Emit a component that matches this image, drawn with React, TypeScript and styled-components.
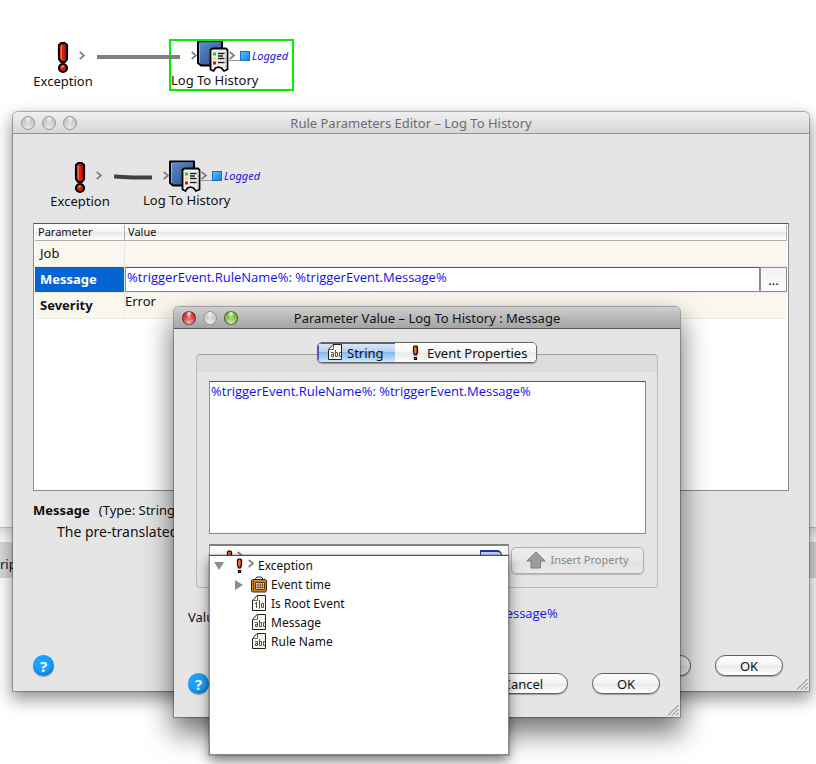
import React from 'react';
import styled, { createGlobalStyle, css } from 'styled-components';

const GlobalStyle = createGlobalStyle`
  * { box-sizing: border-box; }
  body {
    margin: 0;
    background: #fff;
    color: #111;
    font-family: "Noto Sans", "Open Sans", sans-serif;
    font-size: 13px;
    line-height: 18px;
  }
  button, input, textarea { font: inherit; color: inherit; }
`;

const Desktop = styled.main`
  position: relative;
  min-height: 100vh;
  overflow: hidden;
`;

const expressionText = css`
  color: #1010f0;
  font-family: "Open Sans", sans-serif;
`;

/* ---------- page behind the windows ---------- */

const Canvas = styled.section`
  min-height: 528px;
  padding: 39px 34px;
  border-bottom: 1px solid #c4c4c4;
`;

const Divider = styled.div`
  height: 14px;
  background: linear-gradient(#e4e4e4, #f8f8f8 60%, #fff);
`;

const ScriptBar = styled.div`
  height: 36px;
  padding-top: 13px;
  background: #d9d9d9;
`;

/* ---------- rule diagram ---------- */

const Flow = styled.div`
  display: flex;
  align-items: flex-start;
`;

const SourceNode = styled.div`
  display: flex;
  flex-direction: column;
  align-items: center;
  width: 58px;
  padding-top: 3px;
`;

const SourceIcon = styled.div`
  display: flex;
  align-items: center;
  gap: 10px;
  padding-left: 16px;
  height: 31px;

  svg:last-child { margin-bottom: 3px; }
`;

const TargetNode = styled.div<{ $selected?: boolean }>`
  position: relative;
  width: 125px;
  height: 52px;
  padding: 1px 2px 0;
  outline: 2px solid ${p => (p.$selected ? '#00f000' : 'transparent')};
  outline-offset: -2px;
`;

const TargetIcon = styled.div`
  display: flex;
  align-items: center;
  height: 32px;
  padding-left: 20px;
`;

const Outcome = styled.span`
  display: flex;
  align-items: center;
  gap: 2px;
  font-size: 11px;
  line-height: 14px;
  font-style: italic;
  color: #1414e0;
`;

const Square = styled.i`
  width: 10px;
  height: 10px;
  border: 1px solid #1f6fc0;
  background: linear-gradient(135deg, #5cc0ff, #0a84f4);
`;

const NodeLabel = styled.div`
  line-height: 16px;
  white-space: nowrap;
`;

const Link = styled.svg`
  flex: none;
  margin: 15px -11px 0 5px;
  z-index: 1;
`;

const BigBang = () => (
  <svg width="12" height="32" viewBox="0 0 12 32" aria-hidden="true">
    <path d="M4 1.200h4L10 3v14l-2 3H4l-2-3V3z" fill="#dc1e10" stroke="#000" strokeWidth="2.200" strokeLinejoin="round" />
    <path d="M3.500 4L5 2.500V18L3.500 16z" fill="#ff6848" />
    <path d="M7 2.500h1L9 4v12l-1.500 2.500z" fill="#b01208" />
    <circle cx="6" cy="26" r="4" fill="#d81c10" stroke="#000" strokeWidth="2.200" />
    <path d="M4 26c0-2 1.500-3 3-2.500-.2 1.500-1.200 2.600-3 2.500z" fill="#ff9050" />
  </svg>
);

const SmallBang = () => (
  <svg width="7" height="16" viewBox="0 0 7 16" aria-hidden="true">
    <path d="M2.500 1h2l1 1v5l-1 3h-2l-1-3V2z" fill="#e8401c" stroke="#000" strokeWidth="1.200" />
    <path d="M3 2v6" stroke="#ff9a38" />
    <path d="M2.500 12.500h2v2h-2z" fill="#f06020" stroke="#000" strokeWidth="1.200" />
  </svg>
);

const Chevron = ({ tail = false }: { tail?: boolean }) => (
  <svg width={tail ? 11 : 6} height="12" viewBox={tail ? '0 0 11 12' : '0 0 6 12'} fill="none" aria-hidden="true">
    <path d="M.7 2l4.300 3.500L.7 9" stroke="#808080" strokeWidth="1.700" />
    {tail && <path d="M0 10.500h11" stroke="#999" />}
  </svg>
);

const HistoryIcon = () => (
  <svg width="32" height="32" viewBox="0 0 32 32" aria-hidden="true">
    <defs>
      <linearGradient id="book" x1="0" y1="0" x2="1" y2="1">
        <stop offset="0" stopColor="#5f8fce" />
        <stop offset="1" stopColor="#234a8c" />
      </linearGradient>
    </defs>
    <path d="M1 1.500h24v24H4L1 23z" fill="url(#book)" stroke="#000" strokeWidth="2" strokeLinejoin="round" />
    <path d="M2.500 3v20" stroke="#8fb0de" />
    <path d="M3 2.900h21" stroke="#6f97d2" strokeWidth=".8" />
    <path d="M13.500 10L15 8.500h14L30.500 10v19.500L27 31l-2.500-3-3-1-3 1-2 3-3-1.500z" fill="#f1f1ee" stroke="#000" strokeWidth="1.800" strokeLinejoin="round" />
    <path d="M29 10.500v18" stroke="#bbb" strokeWidth="1.200" />
    <path d="M16 12.500h3v3h-3z" fill="#0d2" />
    <path d="M16 17h3v3h-3z" fill="#fe0" />
    <path d="M16 21.500h3v3h-3z" fill="#f00" />
    <path d="M21 13.500h6.500M21 16h5M21 18.500h6.500M21 22.500h6.500" stroke="#222" strokeWidth="1.300" />
  </svg>
);

function RuleFlow({ linkWidth, linkColor, selected }: { linkWidth: number; linkColor: string; selected?: boolean }) {
  return (
    <Flow>
      <SourceNode>
        <SourceIcon><BigBang /><Chevron /></SourceIcon>
        <NodeLabel>Exception</NodeLabel>
      </SourceNode>
      <Link width={linkWidth} height="6" aria-hidden="true">
        <path
          d={selected ? `M0 3H${linkWidth}` : `M0 2.500L${linkWidth / 2} 3.500H${linkWidth}`}
          stroke={linkColor} strokeWidth="4" fill="none"
        />
      </Link>
      <TargetNode $selected={selected}>
        <TargetIcon>
          <Chevron /><HistoryIcon /><Chevron tail />
          <Outcome><Square />Logged</Outcome>
        </TargetIcon>
        <NodeLabel>Log To History</NodeLabel>
      </TargetNode>
    </Flow>
  );
}

/* ---------- windows ---------- */

const windowFrame = css`
  position: absolute;
  border-radius: 5px 5px 0 0;
  background: #e5e5e5;
`;

const EditorWindow = styled.section`
  ${windowFrame}
  top: 112px;
  left: 13px;
  right: 7px;
  box-shadow: 0 0 1px 1px rgba(0, 0, 0, 0.3), 0 7px 16px 2px rgba(0, 0, 0, 0.4);
`;

const DialogWindow = styled.section`
  ${windowFrame}
  top: 307px;
  left: 174px;
  width: 506px;
  box-shadow: 0 0 1px 1px rgba(0, 0, 0, 0.3), 0 14px 28px 2px rgba(0, 0, 0, 0.55);
`;

const TitleBar = styled.header<{ $active?: boolean }>`
  display: grid;
  grid-template-columns: 1fr auto 1fr;
  align-items: center;
  height: 22px;
  padding: 0 8px;
  border-radius: 5px 5px 0 0;
  border-bottom: 1px solid ${p => (p.$active ? '#585858' : '#949494')};
  color: ${p => (p.$active ? '#111' : '#6c6c6c')};
  background: ${p => (p.$active ? 'linear-gradient(#cecece, #a4a4a4)' : 'linear-gradient(#f0f0f0, #d6d6d6)')};
`;

const Title = styled.h1`
  margin: 0;
  font-size: 13px;
  line-height: 20px;
  font-weight: 400;
`;

const Lights = styled.div`
  display: flex;
  gap: 7px;
`;

const Light = styled.button<{ $color?: string }>`
  width: 14px;
  height: 14px;
  padding: 0;
  border: 1px solid ${p => (p.$color ? 'rgba(50, 40, 30, 0.65)' : '#979797')};
  border-radius: 50%;
  background:
    radial-gradient(ellipse at 50% 12%, rgba(255, 255, 255, 0.9), transparent 38%),
    radial-gradient(circle at 50% 95%, rgba(255, 255, 255, 0.65), transparent 60%),
    ${p => p.$color || '#c9c9c9'};
`;

function WindowLights({ colors }: { colors: (string | undefined)[] }) {
  return (
    <Lights>
      {['Close', 'Minimize', 'Zoom'].map((name, i) => (
        <Light key={name} type="button" aria-label={name} $color={colors[i]} />
      ))}
    </Lights>
  );
}

const ResizeGrip = styled.svg`
  position: absolute;
  right: 1px;
  bottom: 1px;
`;

const Grip = () => (
  <ResizeGrip width="12" height="12" aria-hidden="true">
    <path d="M1 11.500L11.500 1M5 11.500L11.500 5M9 11.500L11.500 9" stroke="#777" />
  </ResizeGrip>
);

const Actions = styled.footer`
  display: flex;
  align-items: center;
`;

const HelpButton = styled.button`
  width: 21px;
  height: 21px;
  margin-right: auto;
  padding: 0;
  border: 0;
  border-radius: 50%;
  background: radial-gradient(circle at 45% 40%, #19a2ff 45%, #0878d8 75%);
  box-shadow: 0 1px 1px rgba(0, 0, 0, 0.35);
  color: #fff;
  font-size: 15px;
  line-height: 20px;
  font-weight: 700;
`;

const PillButton = styled.button<{ $wide?: boolean }>`
  width: ${p => (p.$wide ? 90 : 68)}px;
  height: 21px;
  margin-left: 24px;
  padding: 0;
  border: 1px solid #5e5e5e;
  border-radius: 11px;
  background: linear-gradient(#fff, #f4f4f4 48%, #e9e9e9 52%, #fff);
  box-shadow: 0 1px 1px rgba(0, 0, 0, 0.3);
  line-height: 18px;
`;

/* ---------- rule parameters editor ---------- */

const EditorBody = styled.div`
  padding: 25px 20px 15px;
`;

const EditorFlow = styled.div`
  padding-left: 18px;
`;

const TableFrame = styled.div`
  min-height: 268px;
  margin-top: 12px;
  padding: 1px;
  border: 1px solid #8a8a8a;
  border-top-color: #555;
  background: #fff;
`;

const Table = styled.table`
  width: 100%;
  border-collapse: separate;
  border-spacing: 0;
  table-layout: fixed;
`;

const HeadCell = styled.th`
  height: 16px;
  padding: 0 3px 1px;
  border-right: 1px solid #b0b0b0;
  border-bottom: 1px solid #b0b0b0;
  background: linear-gradient(#fff, #f6f6f6 45%, #e8e8e8 50%, #fff);
  font-size: 11px;
  line-height: 14px;
  font-weight: 400;
  text-align: left;

  &:first-child { width: 90px; }
`;

const NameCell = styled.th<{ $required?: boolean; $selected?: boolean }>`
  height: 26px;
  padding: 0 5px 2px;
  border-right: 1px solid #e8e8e8;
  border-bottom: 1px solid #ecebe6;
  background: ${p => (p.$selected ? '#0465d2' : '#faf7ef')};
  color: ${p => (p.$selected ? '#fff' : '#111')};
  font-weight: ${p => (p.$required ? 700 : 400)};
  text-align: left;
`;

const ValueCell = styled.td`
  height: 26px;
  padding: 0;
  border-bottom: 1px solid #ecebe6;
  background: #faf7ef;
  line-height: 16px;
  vertical-align: top;
`;

const ValueEditor = styled.div`
  display: flex;
`;

const ValueInput = styled.input`
  ${expressionText}
  flex: 1;
  min-width: 0;
  height: 25px;
  padding: 0 1px 5px;
  border: 1px solid #8a8a8a;
  border-top-color: #555;
  outline: none;
  background: #fff;
`;

const MoreButton = styled.button`
  width: 27px;
  height: 25px;
  padding: 0;
  border: 1px solid #8c8c8c;
  background: linear-gradient(#f2f2f2, #fcfcfc);
  line-height: 18px;
`;

const Summary = styled.div`
  margin-top: 10px;

  b { margin-right: 9px; }
`;

const Description = styled.p`
  height: 135px;
  margin: 4px 0 0 24px;
  font-size: 14px;
`;

const EditorActions = styled(Actions)`
  margin-top: -3px;
  padding-right: 6px;
`;

/* ---------- parameter value dialog ---------- */

const DialogBody = styled.div`
  padding: 13px 20px 23px 14px;
`;

const Tabs = styled.div`
  position: relative;
  display: flex;
  width: 220px;
  margin: 0 auto -9px 129px;
  border: 1px solid #666;
  border-radius: 5px;
  overflow: hidden;
  box-shadow: 0 1px 1px rgba(0, 0, 0, 0.35);
`;

const Tab = styled.button<{ $active?: boolean }>`
  display: flex;
  align-items: center;
  gap: ${p => (p.$active ? 4 : 8)}px;
  flex: ${p => (p.$active ? '0 0 77px' : 1)};
  height: 19px;
  padding: 0 0 0 ${p => (p.$active ? 10 : 17)}px;
  border: 0;
  box-shadow: ${p => (p.$active ? 'inset 1px 1px 0 #5058b8' : 'none')};
  background: ${p => (p.$active
    ? 'linear-gradient(#dfe9fa, #b8d0f4 45%, #8db6ec 50%, #c8e8ff)'
    : 'linear-gradient(#fff, #f5f5f5 48%, #e8e8e8 52%, #fbfbfb)')};
  line-height: 18px;
  white-space: nowrap;
`;

const Group = styled.div`
  margin: 0 2px 0 8px;
  padding: 26px 11px 13px 12px;
  border: 1px solid #bcbcbc;
  border-top-color: #a0a0a0;
  border-radius: 4px;
  background: linear-gradient(#dcdcdc, #dcdcdc 17px, #e5e5e5 17px);
`;

const ValueText = styled.textarea`
  ${expressionText}
  display: block;
  width: 100%;
  height: 153px;
  padding: 0 1px;
  border: 1px solid #8a8a8a;
  border-top-color: #555;
  outline: none;
  resize: none;
  background: #fff;
`;

const PropertyRow = styled.div`
  display: flex;
  align-items: center;
  gap: 2px;
  margin-top: 10px;
`;

const Picker = styled.div`
  position: relative;
  flex: 0 0 300px;
`;

const Combo = styled.button`
  display: flex;
  justify-content: space-between;
  width: 100%;
  height: 30px;
  padding: 2px 6px 0 16px;
  border: 1px solid #999;
  border-top: 2px solid #808080;
  background: #fff;
`;

const ComboCap = styled.span`
  width: 22px;
  height: 20px;
  margin-top: 2px;
  border: 1px solid #28309a;
  border-top-width: 2px;
  border-radius: 0 5px 5px 0;
  background: linear-gradient(#c8dcf8, #80acec);
`;

const ComboValue = styled.span`
  display: flex;
  gap: 4px;
  align-items: flex-start;
  padding-top: 2px;
`;

const InsertButton = styled.button`
  display: flex;
  flex: 0 0 133px;
  align-items: center;
  justify-content: center;
  gap: 4px;
  height: 27px;
  margin-top: 2px;
  padding: 0;
  border: 1px solid #b0b0b0;
  border-radius: 5px;
  background: linear-gradient(#ececec, #e9e9e9 50%, #e2e2e2 54%, #e9e9e9);
  box-shadow: 0 1px 1px rgba(0, 0, 0, 0.2);
  color: #888;
  font-size: 11px;
  white-space: nowrap;
`;

const Tree = styled.ul`
  position: absolute;
  z-index: 2;
  top: 11px;
  left: 0;
  width: 300px;
  height: 200px;
  margin: 0;
  padding: 0 4px;
  border: 1px solid #8a8a8a;
  border-top-color: #505050;
  background: #fff;
  box-shadow: 0 0 0 1px rgba(0, 0, 0, 0.15), 0 6px 12px rgba(0, 0, 0, 0.5);
  list-style: none;
  font-size: 12px;
  line-height: 19px;
`;

const Branch = styled.ul`
  margin: 0;
  padding: 0 0 0 21px;
  list-style: none;
`;

const TreeRow = styled.div`
  display: flex;
  align-items: center;
  height: 19px;
`;

const Toggle = styled.svg`
  flex: none;
  margin-right: 6px;
`;

const TreeIcon = styled.span`
  display: flex;
  align-items: center;
  justify-content: center;
  width: 16px;
  margin-right: 4px;
`;

const RootIcon = styled(TreeIcon)`
  justify-content: flex-start;
  gap: 5px;
  width: 18px;
  margin: 0 4px 0 6px;

  svg:last-child { margin-bottom: 3px; }
`;

const Preview = styled.dl`
  display: flex;
  gap: 12px;
  margin: 16px 0 0;

  dt { width: 38px; padding-top: 4px; }
  dd { ${expressionText} margin: 0; }
`;

const DialogActions = styled(Actions)`
  margin-top: 47px;
`;

const glyphs = {
  abc: 'M3 8.500H5.500V12.500H3.500V10.500H5.500M7.500 6V12.500H9.500V8.500H7.500M13 8.500H11.500V12.500H13',
  bit: 'M3 8.500H4.500M4.500 7V13M7.500 5V13.500M9.500 8.500H11.500V12.500H9.500z',
};

const DocIcon = ({ kind }: { kind: keyof typeof glyphs }) => (
  <svg width="15" height="17" viewBox="0 0 15 17" fill="none" aria-hidden="true">
    <path d="M.5 5.500L5 .5h8.500v15H.5z" fill="#f9f6ee" stroke="#222" />
    <path d="M.5 5.500H5.500V1" stroke="#666" />
    <path d={glyphs[kind]} stroke="#555" />
  </svg>
);

const CalendarIcon = () => (
  <svg width="16" height="17" viewBox="0 0 16 17" fill="none" aria-hidden="true">
    <path d="M4.500 4V2.500L6 1h4l2 2v2" fill="#fff" stroke="#222" />
    <path d="M.5 4.500l1-1H14l1.500 1v10l-1 1.500h-13l-1-1z" fill="#cf8426" stroke="#3a2000" />
    <path d="M2.500 4.500v10" stroke="#7a4308" />
    <path d="M4.500 6.500h9v7h-9z" fill="#fff3d8" stroke="#60380c" />
    <path d="M4.500 9h9M4.500 11.300h9M7 6.500v7M9.200 6.500v7M11.400 6.500v7" stroke="#60380c" strokeWidth=".8" />
  </svg>
);

const ArrowIcon = () => (
  <svg width="20" height="18" viewBox="0 0 20 18" aria-hidden="true">
    <path d="M10 .8l9 9.200h-4.500v7H5v-7H.8z" fill="#9c9c9c" stroke="#7c7c7c" />
  </svg>
);

const leaves: { label: string; kind: keyof typeof glyphs }[] = [
  { label: 'Is Root Event', kind: 'bit' },
  { label: 'Message', kind: 'abc' },
  { label: 'Rule Name', kind: 'abc' },
];

const EXPRESSION = '%triggerEvent.RuleName%: %triggerEvent.Message%';

function PropertyTree() {
  return (
    <Tree role="tree" aria-label="Event properties">
      <li role="treeitem" aria-expanded="true">
        <TreeRow>
          <Toggle width="10" height="10" aria-hidden="true"><path d="M0 1h10L5 9z" fill="#8c8c8c" /></Toggle>
          <RootIcon><SmallBang /><Chevron /></RootIcon>
          Exception
        </TreeRow>
        <Branch role="group">
          <li role="treeitem" aria-expanded="false">
            <TreeRow>
              <Toggle width="10" height="10" aria-hidden="true"><path d="M0 0v10l8-5z" fill="#8c8c8c" /></Toggle>
              <TreeIcon><CalendarIcon /></TreeIcon>
              Event time
            </TreeRow>
          </li>
          {leaves.map(leaf => (
            <li role="treeitem" key={leaf.label}>
              <TreeRow>
                <Toggle width="10" height="10" aria-hidden="true" />
                <TreeIcon><DocIcon kind={leaf.kind} /></TreeIcon>
                {leaf.label}
              </TreeRow>
            </li>
          ))}
        </Branch>
      </li>
    </Tree>
  );
}

export default function App() {
  return (
    <>
      <GlobalStyle />
      <Desktop>
        <Canvas>
          <RuleFlow linkWidth={83} linkColor="#808080" selected />
        </Canvas>
        <Divider />
        <ScriptBar>rip</ScriptBar>

        <EditorWindow aria-labelledby="editor-title">
          <TitleBar>
            <WindowLights colors={[]} />
            <Title id="editor-title">Rule Parameters Editor – Log To History</Title>
          </TitleBar>
          <EditorBody>
            <EditorFlow>
              <RuleFlow linkWidth={38} linkColor="#404040" />
            </EditorFlow>
            <TableFrame>
              <Table>
                <thead>
                  <tr>
                    <HeadCell scope="col">Parameter</HeadCell>
                    <HeadCell scope="col">Value</HeadCell>
                  </tr>
                </thead>
                <tbody>
                  <tr>
                    <NameCell scope="row">Job</NameCell>
                    <ValueCell />
                  </tr>
                  <tr>
                    <NameCell scope="row" id="param-message" $required $selected>Message</NameCell>
                    <ValueCell>
                      <ValueEditor>
                        <ValueInput aria-labelledby="param-message" defaultValue={EXPRESSION} />
                        <MoreButton type="button">...</MoreButton>
                      </ValueEditor>
                    </ValueCell>
                  </tr>
                  <tr>
                    <NameCell scope="row" $required>Severity</NameCell>
                    <ValueCell>Error</ValueCell>
                  </tr>
                </tbody>
              </Table>
            </TableFrame>
            <Summary><b>Message</b>(Type: String)</Summary>
            <Description>The pre-translated</Description>
            <EditorActions>
              <HelpButton type="button">?</HelpButton>
              <PillButton type="button" $wide>Cancel</PillButton>
              <PillButton type="button">OK</PillButton>
            </EditorActions>
          </EditorBody>
          <Grip />
        </EditorWindow>

        <DialogWindow role="dialog" aria-labelledby="dialog-title">
          <TitleBar $active>
            <WindowLights colors={['#d63a36', undefined, '#7cc13c']} />
            <Title id="dialog-title">Parameter Value – Log To History : Message</Title>
          </TitleBar>
          <DialogBody>
            <Tabs role="tablist">
              <Tab type="button" role="tab" aria-selected="true" $active><DocIcon kind="abc" />String</Tab>
              <Tab type="button" role="tab" aria-selected="false"><SmallBang />Event Properties</Tab>
            </Tabs>
            <Group>
              <ValueText aria-label="String value" defaultValue={EXPRESSION} />
              <PropertyRow>
                <Picker>
                  <Combo type="button" aria-label="Event property" aria-haspopup="tree" aria-expanded="true">
                    <ComboValue><SmallBang /><Chevron /></ComboValue>
                    <ComboCap />
                  </Combo>
                  <PropertyTree />
                </Picker>
                <InsertButton type="button" disabled><ArrowIcon />Insert Property</InsertButton>
              </PropertyRow>
            </Group>
            <Preview>
              <dt>Value:</dt>
              <dd>{EXPRESSION}</dd>
            </Preview>
            <DialogActions>
              <HelpButton type="button">?</HelpButton>
              <PillButton type="button" $wide>Cancel</PillButton>
              <PillButton type="button">OK</PillButton>
            </DialogActions>
          </DialogBody>
          <Grip />
        </DialogWindow>
      </Desktop>
    </>
  );
}
